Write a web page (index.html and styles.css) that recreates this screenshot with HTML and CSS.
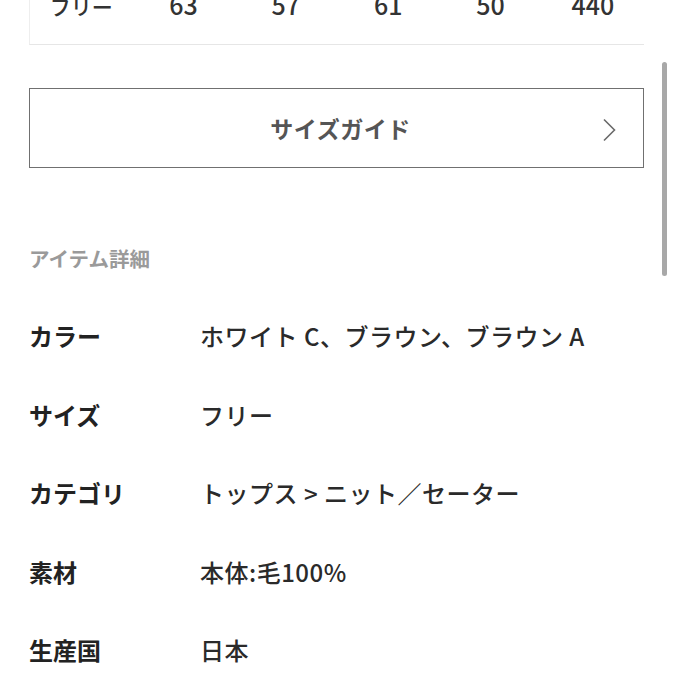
FILE: index.html
```html
<!DOCTYPE html>
<html lang="ja">
<head>
<meta charset="utf-8">
<link rel="stylesheet" href="styles.css">
</head>
<body>
<div class="page">
  <div class="size-table">
    <div class="cell">フリー</div>
    <div class="cell num">63</div>
    <div class="cell num">57</div>
    <div class="cell num">61</div>
    <div class="cell num">50</div>
    <div class="cell num">440</div>
  </div>

  <a class="guide-btn">
    <span class="guide-text">サイズガイド</span>
    <svg class="chevron" width="14" height="24" viewBox="0 0 14 24"><polyline points="2,1.5 12.5,12 2,22.5" fill="none" stroke="#6a6a6a" stroke-width="1.6"/></svg>
  </a>

  <h2 class="section-title">アイテム詳細</h2>

  <dl class="details">
    <dt>カラー</dt><dd>ホワイト C、ブラウン、ブラウン A</dd>
    <dt>サイズ</dt><dd>フリー</dd>
    <dt>カテゴリ</dt><dd>トップス &gt; ニット／セーター</dd>
    <dt>素材</dt><dd>本体:毛100%</dd>
    <dt>生産国</dt><dd>日本</dd>
  </dl>
</div>
<div class="scrollbar"></div>
</body>
</html>
```

FILE: styles.css
```css
html, body {
  margin: 0;
  padding: 0;
  background: #fff;
  overflow: hidden;
}
body {
  font-family: "Noto Sans CJK JP", "Noto Sans", sans-serif;
  color: #222;
  height: 675px;
}
.page {
  padding: 0 31px 0 29px;
}
.size-table {
  display: grid;
  grid-template-columns: repeat(6, 1fr);
  align-items: baseline;
  margin-top: -11px;
  padding-bottom: 23px;
  border-left: 1px solid #eeeeee;
  border-bottom: 1px solid #e6e6e6;
}
.cell {
  text-align: center;
  font-size: 21px;
  line-height: 30px;
  font-weight: 500;
  color: #333;
}
.cell.num {
  font-size: 25px;
}
.guide-btn {
  display: flex;
  align-items: center;
  justify-content: center;
  position: relative;
  margin-top: 43px;
  height: 78px;
  padding-left: 8px;
  border: 1px solid #707070;
  box-sizing: content-box;
}
.guide-text {
  font-size: 23px;
  font-weight: 700;
  color: #555;
  letter-spacing: 0.5px;
}
.chevron {
  position: absolute;
  right: 27px;
  top: 29px;
}
.section-title {
  margin: 75px 0 0;
  font-size: 20.5px;
  line-height: 30px;
  font-weight: 700;
  color: #9a9a9a;
}
.details {
  display: grid;
  grid-template-columns: 171px 1fr;
  row-gap: 48.5px;
  margin: 48px 0 0;
}
.details dt {
  font-size: 24px;
  line-height: 30px;
  font-weight: 700;
  color: #222;
}
.details dd {
  margin: 0;
  font-size: 24px;
  line-height: 30px;
  font-weight: 500;
  letter-spacing: 0.5px;
  color: #2a2a2a;
}
.scrollbar {
  position: absolute;
  left: 662px;
  top: 62px;
  width: 5px;
  height: 214px;
  border-radius: 3px;
  background: #a8a8a8;
}
```
